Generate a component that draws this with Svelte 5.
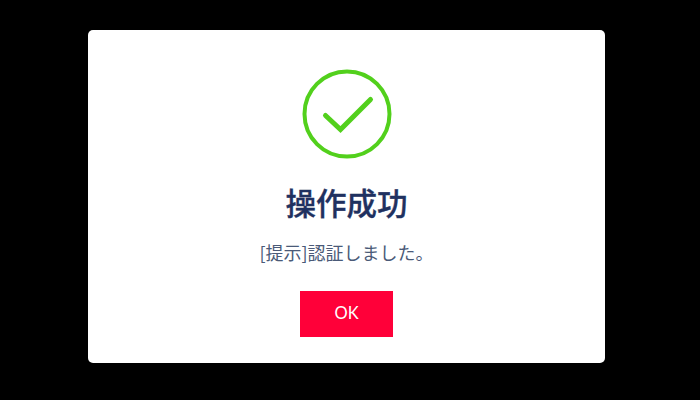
<script>
  const title = '操作成功';
  const message = '[提示]認証しました。';
</script>

<div class="page">
  <div class="card">
    <svg class="icon" width="90" height="90" viewBox="0 0 90 90" aria-hidden="true">
      <circle cx="45" cy="45" r="42.5" fill="none" stroke="#52d01c" stroke-width="4" />
      <path d="M23.5 46.5 L38.5 60.5 L68.5 30.5" fill="none" stroke="#52d01c" stroke-width="5" stroke-linecap="round" stroke-linejoin="miter" />
    </svg>
    <h1>{title}</h1>
    <p>{message}</p>
    <button type="button">OK</button>
  </div>
</div>

<style>
  :global(body) {
    margin: 0;
    background: #000;
  }
  .page {
    width: 700px;
    height: 400px;
    background: #000;
    padding: 30px 0 0 88px;
    box-sizing: border-box;
    overflow: hidden;
  }
  .card {
    width: 517px;
    height: 333px;
    background: #fff;
    border-radius: 5px;
    box-sizing: border-box;
    padding-top: 39px;
    display: flex;
    flex-direction: column;
    align-items: center;
    font-family: "Noto Sans CJK JP", "Noto Sans", sans-serif;
  }
  .icon {
    display: block;
  }
  h1 {
    margin: 21px 0 0;
    font-size: 30.5px;
    line-height: 44px;
    font-weight: 500;
    -webkit-text-stroke: 0.35px #1f3160;
    color: #1f3160;
  }
  p {
    margin: 15px 0 0;
    font-size: 18px;
    line-height: 26px;
    font-weight: 400;
    color: #4a5a78;
  }
  button {
    margin-top: 26px;
    width: 93px;
    height: 46px;
    border: 0;
    border-radius: 0;
    background: #ff0039;
    color: #fff;
    font-family: Lato, "Noto Sans", sans-serif;
    font-size: 16.5px;
    padding: 0 0 2px;
  }
</style>
